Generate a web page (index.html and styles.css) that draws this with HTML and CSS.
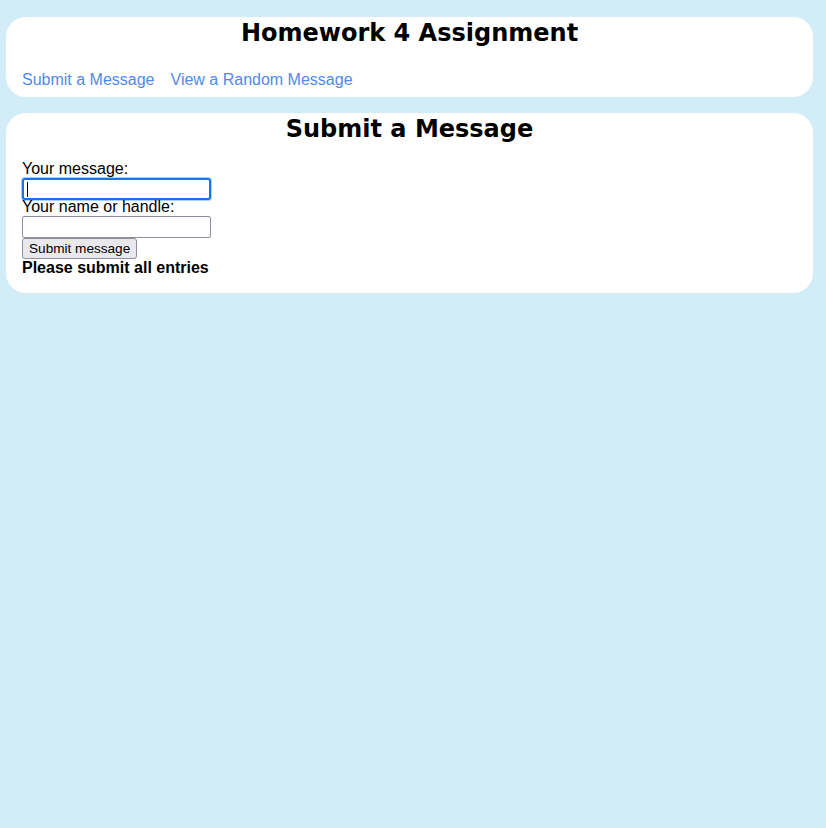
FILE: index.html
```html
<!DOCTYPE html>
<html lang="en">
<head>
<meta charset="utf-8">
<title>Homework 4 Assignment</title>
<link rel="stylesheet" href="styles.css">
</head>
<body>
<header class="card header-card">
  <h1 class="title">Homework 4 Assignment</h1>
  <nav class="nav">
    <a class="nav-link" href="#">Submit a Message</a>
    <a class="nav-link" href="#">View a Random Message</a>
  </nav>
</header>
<main class="card form-card">
  <h2 class="title">Submit a Message</h2>
  <form class="form">
    <label class="label label-first" for="msg">Your message:</label>
    <input class="field field-focused" id="msg" type="text">
    <label class="label" for="name">Your name or handle:</label>
    <input class="field" id="name" type="text">
    <button class="submit" type="button">Submit message</button>
    <p class="notice">Please submit all entries</p>
  </form>
</main>
</body>
</html>
```

FILE: styles.css
```css
html, body {
  margin: 0;
  padding: 0;
}
body {
  background: #d3edf8;
  padding: 17px 13px 0 6px;
  font-family: "Liberation Sans", Arial, sans-serif;
  font-size: 16px;
  color: #000;
  display: flex;
  flex-direction: column;
  gap: 16px;
}
.card {
  background: #fff;
  border-radius: 20px;
  padding: 0 16px;
}
.header-card {
  height: 80px;
  box-sizing: border-box;
}
.form-card {
  height: 180px;
  box-sizing: border-box;
}
.title {
  margin: 0;
  font-family: "DejaVu Sans", Verdana, sans-serif;
  font-weight: bold;
  font-size: 24px;
  line-height: 32px;
  text-align: center;
}
.nav {
  display: flex;
  gap: 16px;
  margin-top: 22px;
  line-height: 18px;
}
.nav-link {
  color: #5289e8;
  text-decoration: none;
}
.form {
  display: flex;
  flex-direction: column;
  align-items: flex-start;
  margin-top: 14px;
}
.label {
  line-height: 18px;
  display: block;
}
.label-first {
  margin-top: 1px;
}
.field {
  box-sizing: border-box;
  width: 189px;
  height: 22px;
  margin: 0;
  border: 1px solid #8f8f9d;
  border-radius: 2px;
  background: #fff;
  padding: 0 4px;
  font-family: "Liberation Sans", Arial, sans-serif;
  font-size: 13px;
}
.field-focused {
  height: 22px;
  margin-bottom: -2px;
  border: 2px solid #1a73e8;
  border-radius: 3px;
  box-shadow: 0 0 0 1px #a8d1fa;
  outline: none;
  background: #fff linear-gradient(#000, #000) no-repeat 3px 2px / 1px 15px;
}
.submit {
  margin: 0;
  height: 21px;
  padding: 0 6px;
  border: 1px solid #8f8f9d;
  border-radius: 3px;
  background: #e9e9ed;
  font-family: "Liberation Sans", Arial, sans-serif;
  font-size: 13.6px;
  color: #000;
}
.notice {
  margin: 0;
  font-weight: bold;
  line-height: 18px;
}
```
